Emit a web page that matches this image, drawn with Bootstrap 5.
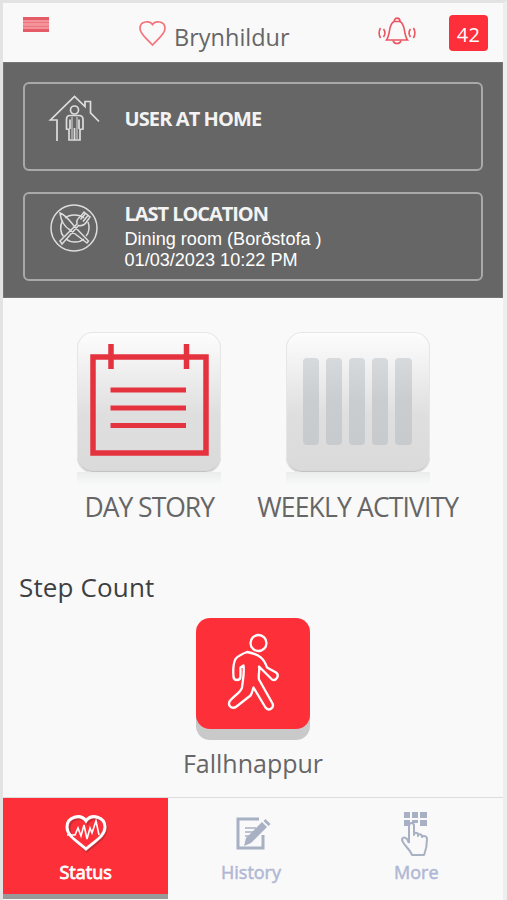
<!DOCTYPE html>
<html lang="en">
<head>
<meta charset="utf-8">
<meta name="viewport" content="width=device-width, initial-scale=1">
<title>Status</title>
<link href="https://cdn.jsdelivr.net/npm/bootstrap@5.3.0/dist/css/bootstrap.min.css" rel="stylesheet">
<style>
body{font-family:"Open Sans","Noto Sans",sans-serif;background:#f8f8f8;color:#666}
svg{display:block;flex:none}
.screen{height:900px;border:3px solid #e3e3e3;border-right:4px solid #eceeef;border-bottom:0;background:#f9f9f9;overflow:hidden;white-space:nowrap}
.topbar{height:59px;padding:0 15px 0 20px}
.menu-icon{margin-top:14px}
.heart-icon{margin:16px 0 0 90px}
.user-name{font-size:23.5px;line-height:32px;margin:18px 0 0 7px;width:204px}
.alert-count{width:39px;height:36px;margin:12px 0 0 auto;border-radius:4px;background:#fd2f3b;color:#fff;font-size:20px;line-height:40px;letter-spacing:.2px}
.info-panel{height:236px;padding:20px;background:#666;color:#fff;box-shadow:inset 0 0 0 1px #757575}
.info-box{height:89px;border:2px solid #a9a9a9;border-radius:6px;margin-bottom:21px;padding-left:23px}
.info-title{font-size:20px;font-weight:700;letter-spacing:-.9px;line-height:24px;color:#f3f3f3}
.info-copy{padding-left:24.500px}
.info-line{font:18.1px/21.5px "Liberation Sans",Arial,sans-serif;position:relative;top:1.500px}
.tiles{padding:34px 41px 0 42px}
.tile{width:144px;height:141px;border-radius:16px;background:linear-gradient(#fdfdfd 0,#f4f4f4 18%,#dfdfdf 58%,#dadada 100%);box-shadow:inset 0 0 0 1px #e6e6e6,inset 0 -2px 1px #c0c0c0}
.tile-foot{width:144px;height:13px;background:linear-gradient(#eaeded,#f9f9f9);margin-top:-1px}
.tile-name{font-size:26px;line-height:34px}
.caps{font-size:26.500px;letter-spacing:-1px;margin-top:5px}
.caps-wide{letter-spacing:-.85px}
.section-name{font-size:26px;line-height:34px;letter-spacing:.15px;color:#3d3f42;margin:46px 0 0 16px}
.step-tile{width:114px;height:111px;border-radius:14px;background:#fd303a;box-shadow:0 11px 0 #c9c9c9}
.tabs{height:103px;border-top:1px solid #ddd;padding-right:4px}
.tab{height:96px;color:#b0b7d4;font-size:18px;line-height:24px;-webkit-text-stroke:.5px}
.tab.current{background:#fd303a;color:#fff;box-shadow:0 5px 0 #999;-webkit-text-stroke:.8px}
</style>
<script src="https://cdn.jsdelivr.net/npm/bootstrap@5.3.0/dist/js/bootstrap.bundle.min.js"></script>
</head>
<body>
<main class="screen d-flex flex-column">
  <header class="topbar d-flex align-items-start">
    <svg class="menu-icon" width="26" height="15"><path fill="#f4929a" d="M0 0h26v15H0z"/><path stroke="#e65b68" stroke-width="3" d="M0 1.5h26M0 13.5h26"/><path stroke="#ec7580" d="M0 5.5h26M0 9.5h26"/></svg>
    <svg class="heart-icon" width="28" height="28" viewBox="0 0 28 28" fill="none" stroke="#f5737c" stroke-width="1.7"><path d="M13.500 5.500C11 1.500 1 1.500 1 9.500c0 5.500 6.500 10 12.500 16.500C19.500 19.500 26 15 26 9.500c0-8-10-8-12.500-4z"/></svg>
    <div class="user-name">Brynhildur</div>
    <svg width="38" height="31" viewBox="0 0 38 31" fill="none" stroke="#ea5661" stroke-width="1.600" style="margin-top:13px"><path d="M16 5.500c-6 3-3 12-7.500 18.500h21C25 17.500 28 8.500 22 5.500"/><path d="M16.200 5.500c0-4.500 5.800-4.500 5.800 0zM15 24.500c1 4 7 4 8 0"/><path d="M5.500 13c2 2.600 1.800 5.400 0 8M2.500 12c-1.700 3-1.700 7 0 10M32.500 13c-2 2.600-1.800 5.400 0 8M35.500 12c1.700 3 1.700 7 0 10"/></svg>
    <div class="alert-count text-center">42</div>
  </header>

  <section class="info-panel">
    <div class="info-box d-flex">
      <svg width="52" height="54" viewBox="0 0 52 54" fill="none" stroke="#ddd" stroke-width="1.700" style="margin-top:8px"><path d="M9 49V28H2.500L26.500 4.500 37 14.500V9.500h5.500v11.300L51 29.500"/><circle cx="26.500" cy="18" r="4"/><path d="M22 23.500h9c2.500 0 4 1.500 4 4V37l-3 .5V48h-11V37.500L18.500 37v-9.500c0-2.500 1-4 3.500-4zM22 27.500V37M31 27.500V37M26.500 36v12"/><path stroke-width="1" d="M24 25v22M29 25v22"/></svg>
      <div class="info-copy"><div class="info-title" style="margin-top:23px">USER AT HOME</div></div>
    </div>
    <div class="info-box d-flex mb-0">
      <svg width="52" height="54" viewBox="0 0 52 54" fill="none" stroke="#ddd" stroke-width="1.500" style="margin-top:8px"><circle cx="26" cy="26" r="23"/><path d="M17 16c5-4 14-4 19 0M18 37c5 4 13 4 18 0M14.500 19c-3 5-2 12 1 15.500M40 20c2 5 1 11-2 14"/><path d="M12 11c1 9 5 14 10 17l17 13 1.500-2L26 24C21 18 18 13 12 11zM12 39l17-17c-1-4 1-6 4-8l3-4 6 5-3.500 5c-2 3-5 4-8 3.500L14 42z"/><path d="M37.500 11.500l-5 6M40 13.500l-5 6"/></svg>
      <div class="info-copy"><div class="info-title" style="margin-top:8px;margin-bottom:1px;letter-spacing:-1.050px">LAST LOCATION</div>
      <div class="info-line">Dining room (Borðstofa )</div><div class="info-line">01/03/2023 10:22 PM</div></div>
    </div>
  </section>

  <section class="tiles row g-0">
    <div class="col-6 d-flex flex-column align-items-center">
      <div class="tile"><svg width="144" height="141" viewBox="0 0 144 141" fill="none" stroke="#e5323f"><path stroke-width="5.500" d="M16 25h113v96H16zM34 12v25M109.500 12v25"/><path stroke-width="5" d="M33.500 58H109M33.500 76H109M33.500 93.500H109"/></svg></div>
      <div class="tile-foot"></div><div class="tile-name caps">DAY STORY</div>
    </div>
    <div class="col-6 d-flex flex-column align-items-center">
      <div class="tile"><svg width="144" height="141" viewBox="0 0 144 141"><defs><linearGradient id="barfill" x2="0" y2="1"><stop stop-color="#d6dadc"/><stop offset=".5" stop-color="#c9cdcf"/><stop offset="1" stop-color="#c8cbcd"/></linearGradient></defs><g fill="url(#barfill)"><rect x="17" y="26" width="16" height="87" rx="4"/><rect x="40" y="26" width="16" height="87" rx="4"/><rect x="63" y="26" width="16" height="87" rx="4"/><rect x="86" y="26" width="16" height="87" rx="4"/><rect x="109" y="26" width="17" height="87" rx="4"/></g></svg></div>
      <div class="tile-foot"></div><div class="tile-name caps caps-wide">WEEKLY ACTIVITY</div>
    </div>
  </section>

  <h2 class="section-name fw-normal">Step Count</h2>
  <section class="d-flex flex-column align-items-center" style="margin-top:14px">
    <div class="step-tile"><svg width="114" height="111" viewBox="0 0 114 111" fill="none" stroke="#fff" stroke-width="2.300" stroke-linejoin="round"><circle cx="62.500" cy="25" r="8"/><path d="M51 33.500c-4 1.500-9 4-11.500 7-2 4-2.500 12-2 18 .5 4 6.500 4 7 0V49l3-2c1 8-.5 14-1.500 22-1 5-9 9-12.500 14-2 5 3 8 7 5l14-11c2-3 2-6 3-8l12 20c3 4 9 1 7-4L63 61c-1-4 1-10 0-13l13 13c4 2 8-4 4-7l-9-5c-3-9-7-13-20-15.500z" transform="translate(0 .5)"/></svg></div>
    <div class="tile-name" style="font-size:25px;margin-top:17px">Fallhnappur</div>
  </section>

  <nav class="tabs row g-0 mt-auto text-center">
    <div class="tab current col-4"><svg class="mx-auto" width="46" height="42" viewBox="0 0 46 42" fill="none" stroke="#fff" stroke-width="3" style="margin:15px 0 5px"><path stroke="#a92d35" stroke-width="3" opacity=".65" d="M24.500 10C19 2 6 6 6 15c0 10 10 15 18 23 9-8 19-13 19-23 0-9-13-13-18.500-5z"/><path d="M23 8C17.500 0 4 4 4 14c0 9 10 14 19 22 9-8 19-13 19-22 0-10-13.500-14-19-6z"/><path stroke-width="1.600" d="M4 22h8l3-7 3 8 3-11 3 14 3-11 2 5 4-12 3 14"/></svg><div>Status</div></div>
    <div class="tab col-4"><svg class="mx-auto" width="46" height="42" viewBox="0 0 46 42" fill="none" stroke="#a8b0c3" stroke-width="3" style="margin:15px 0 5px"><path d="M31 6H10v29h25V22"/><path stroke-width="1.500" d="M17 15h11M17 19h9M17 23h5"/><path fill="#a8b0c3" stroke="none" d="M16 33l2-8 16-16 5 5-16 16zM35.500 8l2-2 5 5-2 2z"/></svg><div>History</div></div>
    <div class="tab col-4"><svg class="mx-auto" width="42" height="50" viewBox="0 0 42 50" fill="none" stroke="#a8b0c3" stroke-width="2" style="margin:11px 0 1px"><path fill="#a8b0c3" stroke="none" d="M9 3h6v6H9zM17 3h6v6h-6zM25 3h7v6h-7zM9 11h6v6H9zM17 11h6v3h-6zM25 11h7v6h-7z"/><path stroke-linejoin="round" d="M14 34V17c0-4 5-4 5 0v9c0-3 4-3 4 0v1c0-3 4-2 4 1 1-2 5-1 5 2 0 9-1 11-3 16H17C15 40 9 37 7 31c0-3 3-3 5-1l2 4" /></svg><div>More</div></div>
  </nav>
</main>
</body>
</html>
